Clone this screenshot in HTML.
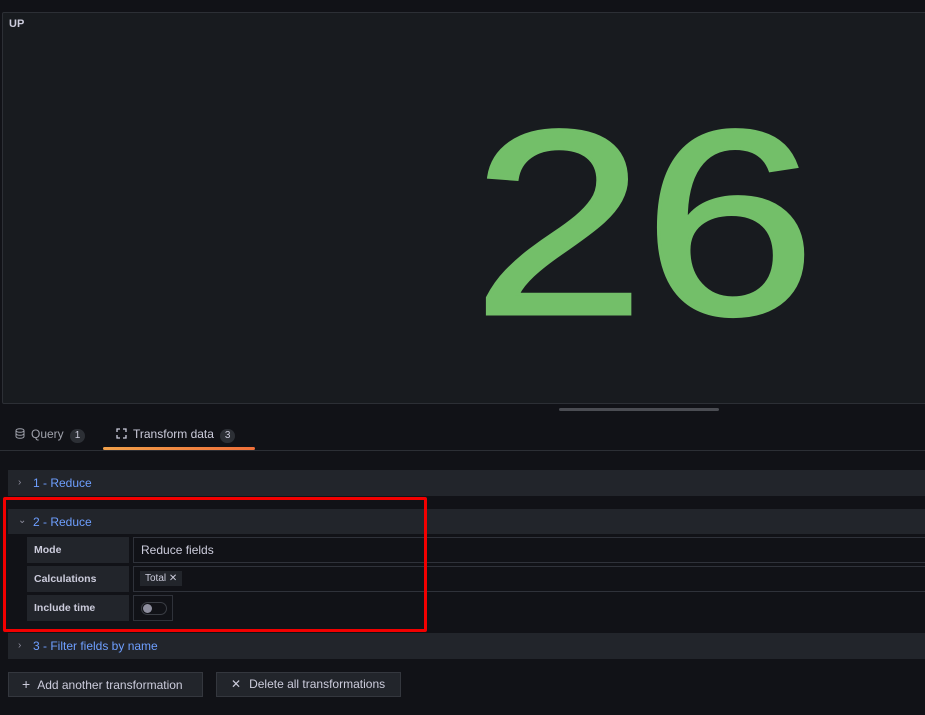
<!DOCTYPE html>
<html><head><style>
*{box-sizing:border-box;margin:0;padding:0}
body{width:925px;height:715px;background:#111217;font-family:"Liberation Sans",sans-serif;position:relative;overflow:hidden;color:#ccccdc}
.abs{position:absolute}
.panel{left:2px;top:12px;width:930px;height:392px;background:#181b1f;border:1px solid #2c2f35;border-radius:2px}
.num{left:472px;top:91px;font-size:264px;line-height:264px;color:#73bf69;letter-spacing:-2px;transform:scaleX(1.18);transform-origin:0 0;-webkit-text-stroke:3px #73bf69}
.row{left:8px;width:930px;height:26px;background:#22252b;font-size:12px;color:#6e9fff;line-height:26px;padding-left:25px}
.chev{position:absolute;left:10px;top:0;color:#8e8e9e;font-size:10px}
.lab{left:27px;width:102px;height:26px;background:#22252b;font-size:10.5px;font-weight:bold;color:#ccccdc;line-height:26px;padding-left:7px}
.inp{left:133px;width:800px;height:26px;background:#111217;border:1px solid #2f323a;font-size:12px;line-height:24px;padding-left:7px;color:#ccccdc}
.btn{top:672px;height:25px;background:#22252b;border:1px solid #34373e;font-size:12px;color:#ccccdc;line-height:23px}
.badge{display:inline-block;background:#2c2f35;border-radius:8px;font-size:10px;padding:0 5px;line-height:14px;margin-left:6px;color:#ccccdc}
</style></head><body>
<div class="abs panel"></div>
<div class="abs" style="left:9px;top:18px;font-size:11px;font-weight:bold;color:#ccccdc">UP</div>
<div class="abs num">26</div>
<div class="abs" style="left:559px;top:408px;width:160px;height:3px;background:#4a4c52;border-radius:2px"></div>
<div class="abs" style="left:0;top:450px;width:925px;height:1px;background:#2c2f35"></div>
<div class="abs" style="left:15px;top:427px;font-size:12px;color:#9fa1ab">
<svg width="10" height="11" viewBox="0 0 10 11" style="vertical-align:-1px;margin-right:6px"><ellipse cx="5" cy="2.5" rx="4" ry="1.8" fill="none" stroke="#9fa1ab"/><path d="M1 2.5v6c0 1 1.8 1.8 4 1.8s4-.8 4-1.8v-6M1 5.5c0 1 1.8 1.8 4 1.8s4-.8 4-1.8" fill="none" stroke="#9fa1ab"/></svg>Query<span class="badge">1</span></div>
<div class="abs" style="left:116px;top:427px;font-size:12px;color:#ccccdc">
<svg width="11" height="11" viewBox="0 0 11 11" style="vertical-align:-1px;margin-right:6px" fill="none" stroke="#ccccdc" stroke-width="1.3"><path d="M1 4V1h3M7 1h3v3M10 7v3H7M4 10H1V7"/></svg>Transform data<span class="badge">3</span></div>
<div class="abs" style="left:103px;top:447px;width:152px;height:3px;background:linear-gradient(90deg,#f1a04a,#f0703a);border-radius:2px"></div>
<div class="abs row" style="top:470px"><span class="chev">›</span>1 - Reduce</div>
<div class="abs row" style="top:509px;height:25px"><span class="chev" style="top:-1px">⌄</span>2 - Reduce</div>
<div class="abs lab" style="top:537px">Mode</div>
<div class="abs inp" style="top:537px">Reduce fields</div>
<div class="abs lab" style="top:566px">Calculations</div>
<div class="abs inp" style="top:566px;padding-left:6px"><span style="display:inline-block;background:#22252b;font-size:10px;line-height:15px;padding:0 5px;margin-top:4px;vertical-align:top">Total ✕</span></div>
<div class="abs lab" style="top:595px">Include time</div>
<div class="abs" style="left:133px;top:595px;width:40px;height:26px;background:#111217;border:1px solid #2f323a"><div style="position:absolute;left:7px;top:6px;width:26px;height:13px;border:1px solid #3a3d44;border-radius:7px"><div style="position:absolute;left:1px;top:1px;width:9px;height:9px;border-radius:50%;background:#8e8e9e"></div></div></div>
<div class="abs row" style="top:633px"><span class="chev">›</span>3 - Filter fields by name</div>
<div class="abs btn" style="left:8px;width:195px;padding-left:13px"><span style="font-size:14px;margin-right:7px">+</span>Add another transformation</div>
<div class="abs btn" style="left:216px;width:185px;padding-left:14px"><span style="margin-right:8px">✕</span>Delete all transformations</div>
<div class="abs" style="left:3px;top:497px;width:424px;height:135px;border:3px solid #f20000;border-radius:2px"></div>
</body></html>
